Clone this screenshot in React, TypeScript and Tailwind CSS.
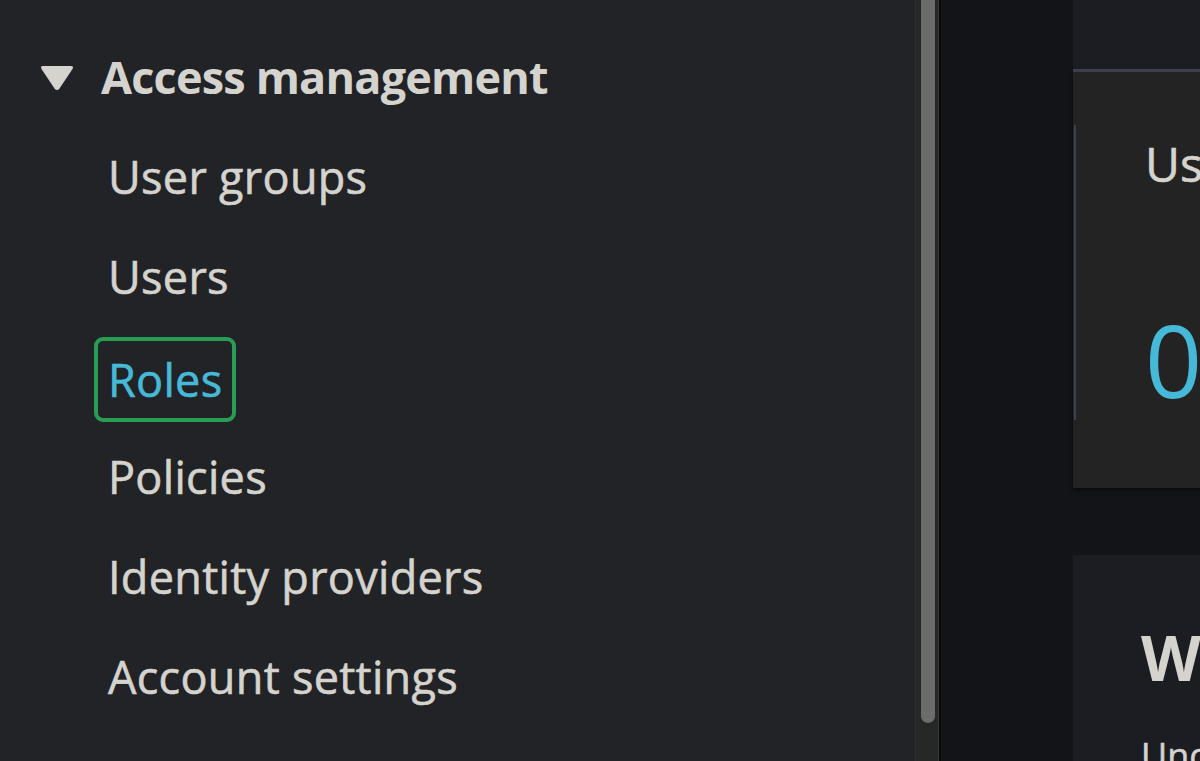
import React from "react";

const items = ["User groups", "Users", "Roles", "Policies", "Identity providers", "Account settings"];

export default function App() {
  return (
    <div
      className="flex w-[1200px] h-[761px] overflow-hidden bg-[#131417]"
      style={{ fontFamily: '"Open Sans", "Noto Sans", sans-serif' }}
    >
      {/* side nav */}
      <nav className="w-[915px] shrink-0 bg-[#222326] pt-[27px]">
        <div className="flex h-[100px] items-center">
          <svg className="ml-[39px] w-[36px] h-[27px]" viewBox="0 0 36 27">
            <path d="M4 2 H32 Q35 2 33.5 5 L20.5 24.5 Q18 27.5 15.5 24.5 L2.5 5 Q1 2 4 2 Z" fill="#d5d3ce" />
          </svg>
          <span className="ml-[26px] text-[45px] font-bold text-[#d5d3ce] tracking-[-0.8px]">Access management</span>
        </div>
        {items.map((item) => (
          <div key={item} className="flex h-[100px] items-center pl-[94px]">
            {item === "Roles" ? (
              <span className="mt-[5px] flex h-[85px] items-center rounded-[9px] border-[4px] border-[#2a9d55] px-[10px] text-[45px] tracking-[0.3px] [-webkit-text-stroke:0.6px_#47b9d8] text-[#47b9d8]">
                {item}
              </span>
            ) : (
              <span className="pl-[14px] text-[45px] tracking-[0.3px] [-webkit-text-stroke:0.6px_#d5d3ce] text-[#d5d3ce]">
                {item}
              </span>
            )}
          </div>
        ))}
      </nav>

      {/* scrollbar */}
      <div className="flex w-[26px] shrink-0">
        <div className="w-px bg-[#2f3031]" />
        <div className="w-[22px] bg-[#262727] pl-[5px]">
          <div className="h-[723px] w-[14px] rounded-b-[7px] bg-[#6b6b6b]" />
        </div>
        <div className="w-px bg-[#3a3a3b]" />
        <div className="w-[2px] bg-[#0b0b0c]" />
      </div>

      {/* main */}
      <main className="flex-1 pl-[132px]">
        <div className="h-[69px] bg-[#1b1d22]" />
        <div className="h-[3px] bg-[#3d4451]" />
        <div className="relative h-[416px] bg-[#232324] shadow-[0_2px_4px_rgba(0,0,0,0.5)] pt-[62px] pl-[72px] overflow-hidden whitespace-nowrap">
          <div className="absolute left-[1px] top-[53px] h-[295px] w-[2px] bg-[#3a4250]" />
          <div className="text-[48px] leading-[60px] [-webkit-text-stroke:0.6px_#d5d3ce] text-[#d5d3ce]">Users</div>
          <div className="mt-[115px] text-[100px] leading-[100px] text-[#47b9d8]">0</div>
        </div>
        <div className="mt-[67px] h-[300px] bg-[#1b1d22] pt-[62px] pl-[68px] overflow-hidden whitespace-nowrap">
          <div className="text-[62px] font-bold leading-[80px] text-[#d5d3ce]">What's new</div>
          <div className="mt-[32px] text-[36px] [-webkit-text-stroke:0.5px_#d5d3ce] text-[#d5d3ce]">Understand</div>
        </div>
      </main>
    </div>
  );
}
